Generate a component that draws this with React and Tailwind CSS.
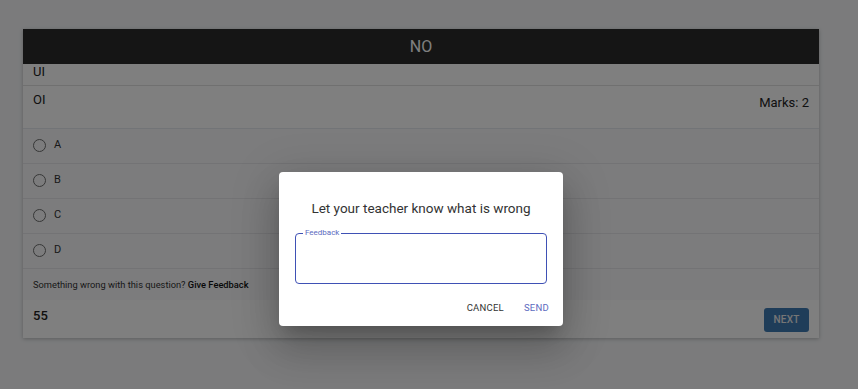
import React from "react";

function Radio() {
  return <span className="inline-block w-[13px] h-[13px] rounded-full border-[1.5px] border-[#6e6e6e]"></span>;
}

export default function App() {
  const opts = ["A", "B", "C", "D"];
  return (
    <div className="relative w-[858px] h-[389px] bg-[#f6f7f9] overflow-hidden" style={{ fontFamily: "Roboto, 'Liberation Sans', sans-serif" }}>
      <div className="pt-[29px] px-[23px]">
        <div className="w-[796px] bg-white shadow-[0_1px_4px_rgba(0,0,0,0.25)]">
          <div className="h-[35px] bg-[#2a2a2a] flex items-center justify-center text-white text-[16px]">NO</div>
          <div className="h-[22px] px-[10px] flex items-start border-b border-[#e0e0e0] text-[13px] text-[#222] leading-[15px]">UI</div>
          <div className="h-[43px] px-[10px] pt-[6px] flex justify-between items-start text-[13px] text-[#222] border-b border-[#e4e8ee]">
            <span className="leading-[15px]">OI</span>
            <span className="mt-[3px] leading-[15px]">Marks: 2</span>
          </div>
          <div className="bg-[#f8f9fb]">
            {opts.map((o) => (
              <div key={o} className="h-[35px] px-[10px] flex items-center gap-[8px] text-[11px] text-[#333] border-b border-[#e6e7ea] pb-[1px]">
                <Radio />
                <span>{o}</span>
              </div>
            ))}
            <div className="h-[31px] px-[10px] flex items-center text-[9.3px] text-[#333]">
              <span>Something wrong with this question? <b className="font-medium text-[#111]">Give Feedback</b></span>
            </div>
          </div>
          <div className="h-[38px] px-[10px] flex items-center justify-between bg-white">
            <span className="text-[13px] font-medium text-[#222] -mt-[6px]">55</span>
            <button className="w-[45px] h-[24px] rounded-[3px] bg-[#3f7ab3] text-[#ececec] text-[10px] font-medium tracking-wide mt-[1px]">NEXT</button>
          </div>
        </div>
      </div>

      <div className="absolute inset-0 bg-black/50"></div>

      <div className="absolute left-[279px] top-[172px] w-[284px] h-[154px] bg-white rounded-[4px] shadow-[0_11px_15px_-7px_rgba(0,0,0,0.2),0_24px_38px_3px_rgba(0,0,0,0.14),0_9px_46px_8px_rgba(0,0,0,0.12)] flex flex-col">
        <div className="pt-[27px] text-center text-[13.5px] text-[#333] leading-[18px]">Let your teacher know what is wrong</div>
        <div className="mx-[16px] mt-[17px] relative">
          <fieldset className="h-[55px] border border-[#3f51b5] rounded-[4px] px-[7px] -mt-[5px]">
            <legend className="px-[2px] text-[8px] leading-[8px] text-[#5c6bc0]">Feedback</legend>
          </fieldset>
        </div>
        <div className="flex justify-end gap-[20px] pr-[14px] mt-[17px] text-[9.5px] tracking-wide">
          <span className="text-[#333]">CANCEL</span>
          <span className="text-[#5c6bc0]">SEND</span>
        </div>
      </div>
    </div>
  );
}
